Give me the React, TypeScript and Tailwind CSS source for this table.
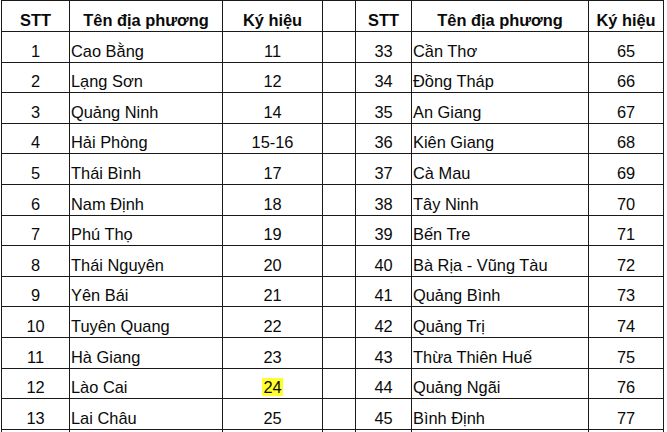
const left = [
  [1, 'Cao Bằng', '11'],
  [2, 'Lạng Sơn', '12'],
  [3, 'Quảng Ninh', '14'],
  [4, 'Hải Phòng', '15-16'],
  [5, 'Thái Bình', '17'],
  [6, 'Nam Định', '18'],
  [7, 'Phú Thọ', '19'],
  [8, 'Thái Nguyên', '20'],
  [9, 'Yên Bái', '21'],
  [10, 'Tuyên Quang', '22'],
  [11, 'Hà Giang', '23'],
  [12, 'Lào Cai', '24'],
  [13, 'Lai Châu', '25'],
];

const right = [
  [33, 'Cần Thơ', '65'],
  [34, 'Đồng Tháp', '66'],
  [35, 'An Giang', '67'],
  [36, 'Kiên Giang', '68'],
  [37, 'Cà Mau', '69'],
  [38, 'Tây Ninh', '70'],
  [39, 'Bến Tre', '71'],
  [40, 'Bà Rịa - Vũng Tàu', '72'],
  [41, 'Quảng Bình', '73'],
  [42, 'Quảng Trị', '74'],
  [43, 'Thừa Thiên Huế', '75'],
  [44, 'Quảng Ngãi', '76'],
  [45, 'Bình Định', '77'],
];

const cell = 'border border-[#1a1a1a] align-bottom pb-[2px] leading-[18px]';

export default function App() {
  return (
    <div className="h-[432px] w-[667px] overflow-hidden bg-white">
      <table
        className="ml-px table-fixed border-collapse text-[16.4px] text-[#0a0a0a]"
        style={{ fontFamily: '"Liberation Sans", Arial, sans-serif' }}
      >
        <colgroup>
          <col className="w-[68px]" />
          <col className="w-[153px]" />
          <col className="w-[100px]" />
          <col className="w-[33px]" />
          <col className="w-[56px]" />
          <col className="w-[177px]" />
          <col className="w-[75px]" />
        </colgroup>
        <thead>
          <tr className="h-[31px] font-bold">
            <th className={`${cell} text-center`}>STT</th>
            <th className={`${cell} text-center`}>Tên địa phương</th>
            <th className={`${cell} text-center`}>Ký hiệu</th>
            <th className={cell}></th>
            <th className={`${cell} text-center`}>STT</th>
            <th className={`${cell} text-center`}>Tên địa phương</th>
            <th className={`${cell} text-center`}>Ký hiệu</th>
          </tr>
        </thead>
        <tbody>
          {left.map((row, i) => {
            const r = right[i];
            return (
              <tr key={row[0]} className="h-[30.6px]">
                <td className={`${cell} text-center`}>{row[0]}</td>
                <td className={`${cell} whitespace-nowrap pl-px`}>{row[1]}</td>
                <td className={`${cell} text-center`}>
                  {row[2] === '24' ? (
                    <span className="bg-[#ffff30] px-px">{row[2]}</span>
                  ) : (
                    row[2]
                  )}
                </td>
                <td className={cell}></td>
                <td className={`${cell} text-center`}>{r[0]}</td>
                <td className={`${cell} whitespace-nowrap pl-px`}>{r[1]}</td>
                <td className={`${cell} text-center`}>{r[2]}</td>
              </tr>
            );
          })}
          <tr className="h-[30.6px]">
            <td className={cell}>&nbsp;</td>
            <td className={cell}></td>
            <td className={cell}></td>
            <td className={cell}></td>
            <td className={cell}></td>
            <td className={cell}></td>
            <td className={cell}></td>
          </tr>
        </tbody>
      </table>
    </div>
  );
}
